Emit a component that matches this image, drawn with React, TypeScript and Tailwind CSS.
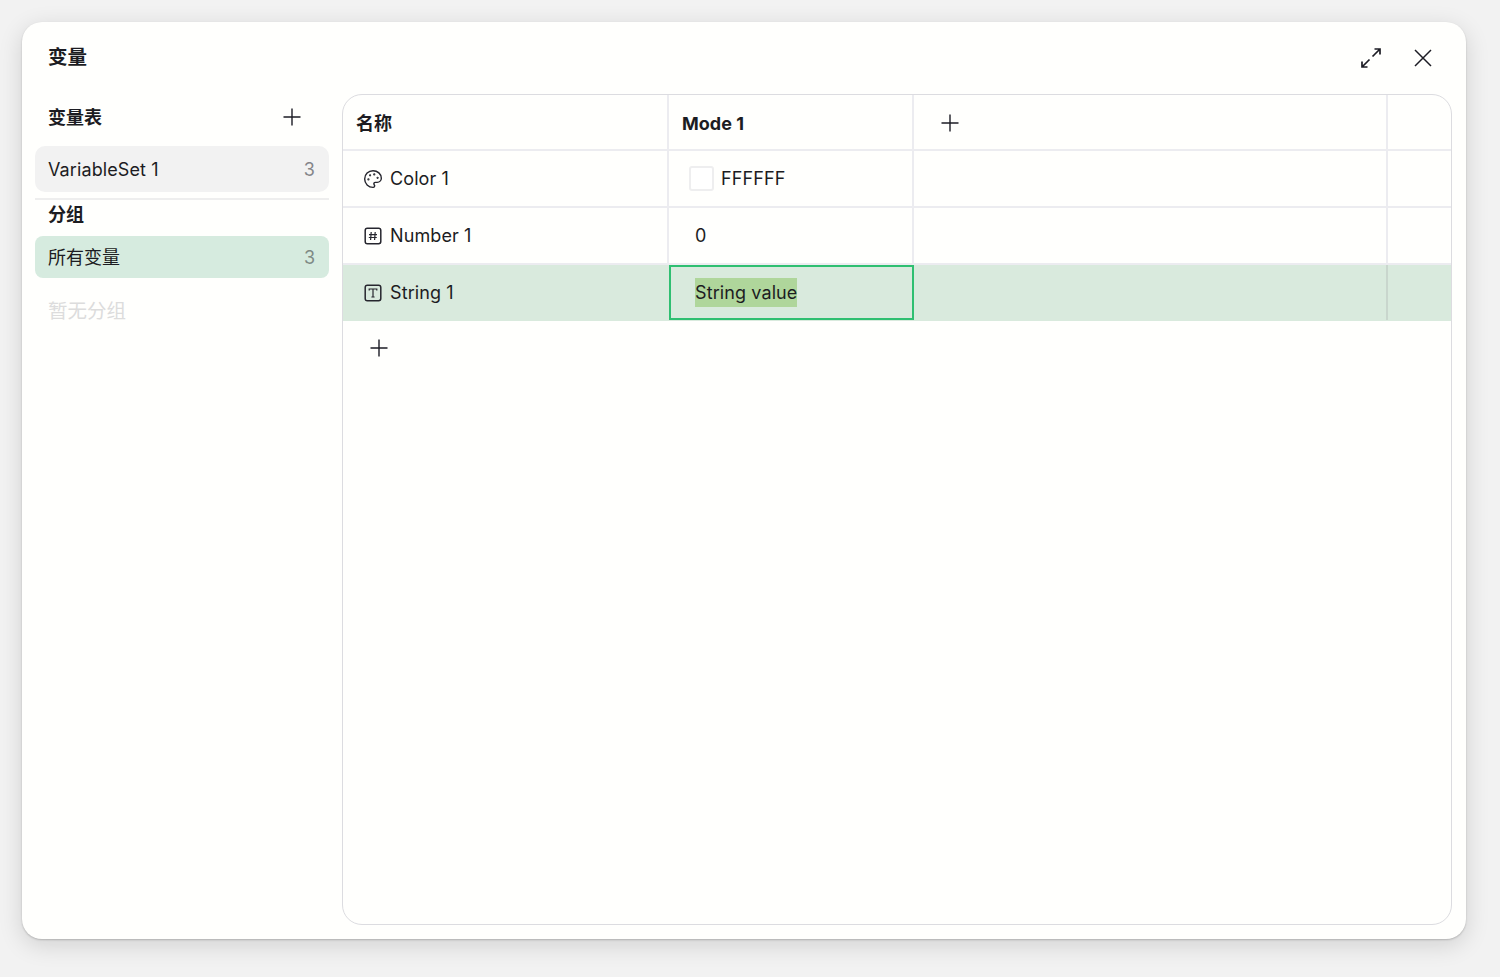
import { Palette } from 'lucide-react';

const font = { fontFamily: 'Inter, "Noto Sans CJK SC", sans-serif' };

function PlusIcon({ className = '' }: { className?: string }) {
  return (
    <svg className={className} width="18" height="18" viewBox="0 0 18 18" fill="none" stroke="#1c1c24" strokeWidth="1.4">
      <path d="M9 0.5V17.5M0.5 9H17.5" />
    </svg>
  );
}

function HashBox() {
  return (
    <svg width="18" height="18" viewBox="0 0 18 18" fill="none" stroke="#26262e" strokeWidth="1.5">
      <rect x="1.2" y="1.2" width="15.6" height="15.6" rx="2.2" />
      <path d="M7.2 5L6.6 13M11.2 5L10.6 13M5 7.6H13M4.8 10.5H12.8" strokeWidth="1.2" />
    </svg>
  );
}

function TextBox() {
  return (
    <svg width="18" height="18" viewBox="0 0 18 18" fill="none" stroke="#26262e" strokeWidth="1.5">
      <rect x="1.2" y="1.2" width="15.6" height="15.6" rx="2.2" />
      <path d="M5.2 6.4V5H12.8V6.4M9 5V13M7.4 13H10.6" strokeWidth="1.2" />
    </svg>
  );
}

function Row({ icon, name, value, selected }: { icon: React.ReactNode; name: string; value: React.ReactNode; selected?: boolean }) {
  return (
    <div className={`grid grid-cols-[326px_245px_474px_1fr] text-[18px] tracking-[0.1px] text-[#1c1c22] ${selected ? 'h-[56px] bg-[#d9eadd] border-b border-transparent' : 'h-[57px] border-b-2 border-[#ececf0]'}`}>
      <div className={`flex items-center gap-[8px] pl-[21px] border-r-2 ${selected ? 'border-transparent' : 'border-[#ececf0]'}`}>
        {icon}
        <span>{name}</span>
      </div>
      {value}
      <div className={`border-r-2 ${selected ? 'border-[#c9d6cd]' : 'border-[#ececf0]'}`} />
      <div />
    </div>
  );
}

export default function App() {
  return (
    <div style={font} className="w-[1500px] h-[977px] bg-[#f2f2f2] p-[22px] pr-[34px] overflow-hidden">
      <div className="h-[917px] bg-[#fffffd] rounded-[20px] shadow-[0_1px_2px_rgba(0,0,0,0.2),0_6px_24px_rgba(0,0,0,0.14)] flex flex-col">
        <div className="h-[72px] flex items-center justify-between pl-[26px] pr-[34px] shrink-0">
          <span className="text-[19.5px] font-bold text-[#1c1c22]">变量</span>
          <div className="flex items-center gap-[33px]">
            <svg width="20" height="20" viewBox="0 0 20 20" fill="none" stroke="#1c1c24" strokeWidth="1.7">
              <path d="M11.5 8.5L19 1M13.5 1H19V6.5M8.5 11.5L1 19M1 13.5V19H6.5" />
            </svg>
            <svg width="18" height="18" viewBox="0 0 18 18" fill="none" stroke="#1c1c24" strokeWidth="1.5">
              <path d="M1 1L17 17M17 1L1 17" />
            </svg>
          </div>
        </div>

        <div className="flex flex-1 min-h-0 pr-[14px] pb-[14px]">
          <aside className="w-[320px] shrink-0 pl-[13px] pr-[13px]">
            <div className="h-[46px] flex items-center justify-between pl-[13px] pr-[28px]">
              <span className="text-[18px] font-bold text-[#1c1c22]">变量表</span>
              <PlusIcon />
            </div>
            <div className="mt-[6px] h-[46px] bg-[#f2f2f2] rounded-[10px] flex items-center justify-between pl-[13px] pr-[14px] text-[18px] tracking-[0.1px] text-[#1c1c22]">
              <span>VariableSet 1</span>
              <span className="text-[#85858a]">3</span>
            </div>
            <div className="mt-[6px] border-t-2 border-[#eeeeee] pt-[1px] pl-[13px] h-[38px] text-[18px] font-bold text-[#1c1c22]">分组</div>
            <div className="h-[42px] bg-[#d6ebdf] rounded-[8px] flex items-center justify-between pl-[13px] pr-[14px] text-[18px] text-[#1c1c22]">
              <span>所有变量</span>
              <span className="text-[#7f8a85]">3</span>
            </div>
            <div className="mt-[19px] pl-[13px] text-[19.5px] text-[#dcdcdc]">暂无分组</div>
          </aside>

          <div className="flex-1 border border-[#dcdce0] rounded-[20px] overflow-hidden">
            <div className="grid grid-cols-[326px_245px_474px_1fr] h-[56px] border-b-2 border-[#ececf0] text-[18px] font-bold text-[#1c1c22]">
              <div className="flex items-center pl-[13px] pt-[2px] border-r-2 border-[#ececf0]">名称</div>
              <div className="flex items-center pl-[13px] pt-[2px] border-r-2 border-[#ececf0]">Mode 1</div>
              <div className="flex items-center pl-[27px] pt-[2px] border-r-2 border-[#ececf0]">
                <PlusIcon />
              </div>
              <div />
            </div>
            <Row
              icon={<Palette size={20} strokeWidth={1.7} color="#26262e" className="-ml-[1px] -mr-[1px]" />}
              name="Color 1"
              value={
                <div className="flex items-center gap-[7px] pl-[20px] border-r-2 border-[#ececf0]">
                  <div className="w-[25px] h-[25px] bg-white border-2 border-[#eeeeef] rounded-[3px]" />
                  <span>FFFFFF</span>
                </div>
              }
            />
            <Row
              icon={<HashBox />}
              name="Number 1"
              value={<div className="flex items-center pl-[26px] border-r-2 border-[#ececf0]">0</div>}
            />
            <Row
              selected
              icon={<TextBox />}
              name="String 1"
              value={
                <div className="flex items-center pl-[24px] border-2 border-[#2fbf71]">
                  <span className="bg-[#afd69b] leading-[29px]">String value</span>
                </div>
              }
            />
            <div className="h-[54px] flex items-center pl-[27px]">
              <PlusIcon />
            </div>
          </div>
        </div>
      </div>
    </div>
  );
}
